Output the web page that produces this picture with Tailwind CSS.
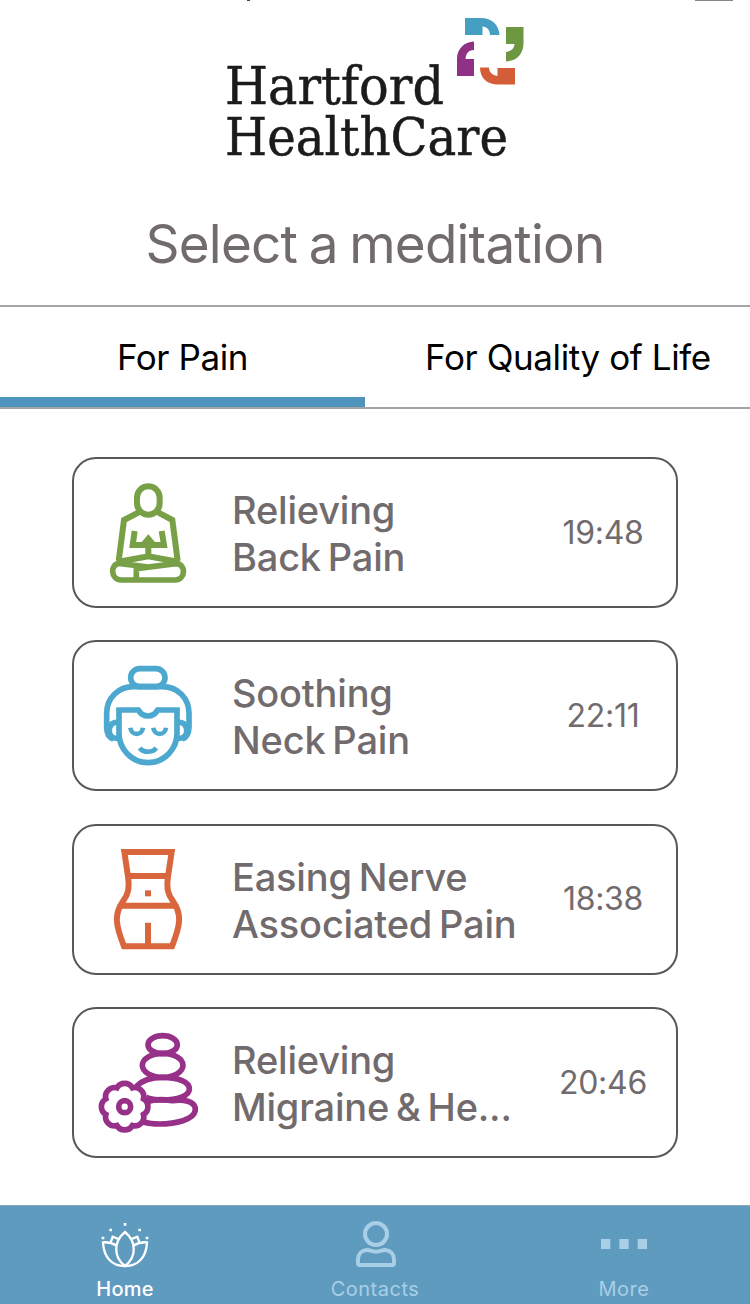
<!DOCTYPE html>
<html lang="en">

<head>
    <meta charset="utf-8" />
    <title>Hartford HealthCare - Select a meditation</title>
    <script src="https://cdn.jsdelivr.net/npm/@tailwindcss/browser@4"></script>
</head>

<body class="relative bg-white w-[750px] h-[1304px] overflow-hidden flex flex-col font-['Inter',sans-serif] text-[#716b6d]">
    <!-- Bottom edge of the status bar -->
    <div class="absolute left-[247px] top-0 w-[3px] h-px bg-[#444]"></div>
    <div class="absolute left-[695px] top-0 w-[38px] h-px bg-[#888]"></div>

    <header class="h-[305px] flex-shrink-0 flex flex-col items-center">
        <svg class="mt-2.5 w-[310px] h-[160px]" viewBox="220 10 310 160" role="img" aria-label="Hartford HealthCare">
            <g fill="#1b1b1b" stroke="#1b1b1b" stroke-width="0.5" font-family="'DejaVu Serif', serif" font-size="51.500">
                <text x="225" y="104" textLength="219" lengthAdjust="spacingAndGlyphs">Hartford</text>
                <text x="225" y="155" textLength="283" lengthAdjust="spacingAndGlyphs">HealthCare</text>
            </g>
            <path fill="#459fc2" d="M465 18H481C492 18 499 25 499.500 35H490C490 30 487 27 482.500 26.500V35H465Z" />
            <path fill="#6d9841" d="M506 27H523.500V43C523.500 54 517 61 506 61.500V52C511 51 514 49 514.500 44H506Z" />
            <path fill="#8f3184" d="M474 41.500V50C469 50 466 53 465.500 59H474V76H457V59C457 49 464 42 474 41.500Z" />
            <path fill="#d35d37" d="M480 67.500H489C489 72 492 75 497.500 76V68H515V84.500H498C487 84.500 480 78 480 67.500Z" />
        </svg>
        <h1 class="mt-10 text-[53px] leading-[68px] tracking-[-0.8px] [word-spacing:-2.5px] whitespace-nowrap">Select a meditation</h1>
    </header>

    <nav class="h-[104px] flex-shrink-0 flex border-y-2 border-[#a5a5a7] text-black text-[35px] leading-[100px]">
        <a class="w-[365px] text-center border-b-[10px] border-[#4f94bd] tracking-[-0.4px]">For Pain</a>
        <a class="flex-1 pl-[60px] whitespace-nowrap tracking-[-0.4px]">For Quality of Life</a>
    </nav>

    <main class="flex-1 px-[72px] pt-12 flex flex-col gap-[32.4px]">
        <section class="h-[151px] flex-shrink-0 flex items-center border-2 border-[#58585a] rounded-[24px] pl-6">
            <svg class="w-[100px] h-[115px]" viewBox="-6 0 300 345" fill="none" stroke="#78a046" stroke-width="18">
                <rect x="111" y="34" width="68" height="85" rx="34" />
                <path d="M116 112L72 135L56 258M174 112L217 135L233 258" />
                <path d="M104 168L98 210H192L185 168" />
                <path fill="#78a046" stroke="none" d="M145 178L170 207H120Z" />
                <path d="M145 195V245M52 261L145 244L238 261" />
                <path stroke-width="17" d="M60 265C29 265 31 315 64 315H225C258 315 259 265 227 266L109 281V315M56 265L145 276L227 266" />
            </svg>
            <h2 class="ml-[34px] pt-[3px] flex-1 text-[38px] leading-[47px] font-medium tracking-[-0.2px] [word-spacing:-3px] whitespace-nowrap">Relieving<br>Back Pain</h2>
            <time class="w-[146px] text-center text-[32px] tracking-[-0.3px]">19:48</time>
        </section>

        <section class="h-[151px] flex-shrink-0 flex items-center border-2 border-[#58585a] rounded-[24px] pl-6">
            <svg class="w-[100px] h-[115px]" viewBox="9 10 300 345" fill="none" stroke="#4da8d0" stroke-width="17">
                <rect x="107" y="42" width="103" height="54" rx="27" />
                <path d="M55 253C40 248 35 236 35 218V176C35 130 70 96 115 96H202C248 96 282 130 282 176V218C282 236 276 248 262 253" />
                <path d="M72 203C47 201 42 216 43 232C44 246 56 253 73 251M246 203C271 201 276 216 275 232C274 246 262 253 245 251" />
                <path d="M72 166H130C144 190 174 190 188 166H246V236C246 284 207 324 159 324C111 324 72 284 72 236Z" />
                <path stroke-width="14" d="M106 219C109 244 141 244 144 219M175 219C178 244 210 244 213 219" />
                <path stroke-width="14" d="M134 280C145 295 172 295 184 280" />
            </svg>
            <h2 class="ml-[34px] pt-[3px] flex-1 text-[38px] leading-[47px] font-medium tracking-[-0.2px] [word-spacing:-3px] whitespace-nowrap">Soothing<br>Neck Pain</h2>
            <time class="w-[146px] text-center text-[32px] tracking-[-0.3px]">22:11</time>
        </section>

        <section class="h-[151px] flex-shrink-0 flex items-center border-2 border-[#58585a] rounded-[24px] pl-6">
            <svg class="w-[100px] h-[115px]" viewBox="-6 6 300 345" fill="none" stroke="#d9663d" stroke-width="18">
                <path d="M73 36H215L204 109C199 148 204 163 219 184C246 222 242 254 216 319H72C46 254 42 222 69 184C84 163 89 148 84 109Z" />
                <path d="M84 108H204M63 197H225M144 248V319" />
                <path d="M135 160H153" />
            </svg>
            <h2 class="ml-[34px] pt-[3px] flex-1 text-[38px] leading-[47px] font-medium tracking-[-0.2px] [word-spacing:-3px] whitespace-nowrap">Easing Nerve<br>Associated Pain</h2>
            <time class="w-[146px] text-center text-[32px] tracking-[-0.3px]">18:38</time>
        </section>

        <section class="h-[151px] flex-shrink-0 flex items-center border-2 border-[#58585a] rounded-[24px] pl-6">
            <svg class="w-[100px] h-[115px]" viewBox="24 0 300 345" fill="none" stroke="#963089" stroke-width="17">
                <ellipse cx="218" cy="59" rx="44" ry="27" />
                <ellipse cx="218" cy="121" rx="61" ry="36" />
                <path d="M139 184C158 164 187 157 218 157C262 157 298 170 298 192C298 213 262 225 218 225C199 225 181 223 168 217" />
                <path d="M175 229C195 222 228 224 247 227C279 222 316 228 316 253C316 286 252 297 208 297C187 297 174 295 161 291" />
                <path d="M80.700 188.600A27 27 0 0 1 127.300 188.600A27 27 0 0 1 160.400 221.700A27 27 0 0 1 160.400 268.300A27 27 0 0 1 127.300 301.400A27 27 0 0 1 80.700 301.400A27 27 0 0 1 47.600 268.300A27 27 0 0 1 47.600 221.700A27 27 0 0 1 80.700 188.600Z" />
                <circle cx="104" cy="245" r="18" />
            </svg>
            <h2 class="ml-[34px] pt-[3px] flex-1 text-[38px] leading-[47px] font-medium tracking-[-0.2px] [word-spacing:-3px] whitespace-nowrap">Relieving<br>Migraine &amp; He...</h2>
            <time class="w-[146px] text-center text-[32px] tracking-[-0.3px]">20:46</time>
        </section>
    </main>

    <footer class="h-[99px] flex-shrink-0 grid grid-cols-3 border-t border-[#8fa9b5] bg-[#5f9abf] text-[#a8cfe5] text-[20px] leading-6 tracking-[0.5px]">
        <a class="flex flex-col items-center text-white font-medium">
            <svg class="mt-3.5 w-[50px] h-[50px]" viewBox="30 60 150 150" fill="none" stroke="#fff" stroke-width="7">
                <path d="M105 96C70 125 70 170 105 198C140 170 140 125 105 96Z" />
                <path d="M80 137C67 129 54 126 39 127C41 171 65 198 105 198C145 198 169 171 171 127C156 126 143 129 130 137" />
                <path d="M62 127L68 110L88 118M148 127L142 110L122 118" />
                <path stroke-width="8" d="M101 73H109M58 90H66M145 90H153M35 114H43M167 114H175" />
            </svg>
            <span class="mt-[7px] tracking-[0.2px]">Home</span>
        </a>
        <a class="flex flex-col items-center">
            <svg class="mt-3.5 w-[50px] h-[50px]" viewBox="90 60 150 150" fill="none" stroke="#a8cfe5" stroke-width="12">
                <circle cx="168" cy="102" r="33" />
                <path stroke-linejoin="round" d="M139 150C124 152 114 163 114 178V190Q114 195 119 195H217Q222 195 222 190V178C222 163 212 152 197 150C187 149 182 155 168 155C154 155 149 149 139 150Z" />
            </svg>
            <span class="mt-[7px]">Contacts</span>
        </a>
        <a class="flex flex-col items-center">
            <svg class="mt-3.5 w-[50px] h-[50px]" viewBox="840 60 150 150" fill="#a8cfe5">
                <rect x="843" y="117" width="28" height="30" />
                <rect x="898" y="117" width="28" height="30" />
                <rect x="953" y="117" width="28" height="30" />
            </svg>
            <span class="mt-[7px] mr-[2px]">More</span>
        </a>
    </footer>
</body>

</html>
